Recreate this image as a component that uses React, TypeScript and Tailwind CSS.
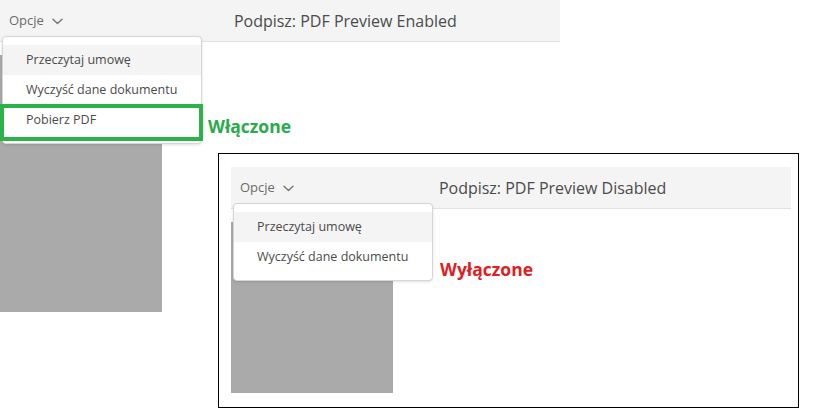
interface MenuItem {
  label: string;
  active?: boolean;
  outlined?: boolean;
}

interface PreviewWindowProps {
  title: string;
  titleClass: string;
  items: MenuItem[];
  bodyClass: string;
  grayClass: string;
}

const Chevron = () => (
  <svg width="11" height="7" viewBox="0 0 11 7" fill="none" className="mt-[2px]">
    <path d="M1 1.2l4.5 4.3L10 1.2" stroke="#7a7a7a" strokeWidth="1.5" strokeLinecap="round" strokeLinejoin="round" />
  </svg>
);

const PreviewWindow = ({ title, titleClass, items, bodyClass, grayClass }: PreviewWindowProps) => {
  return (
    <div className="relative w-[560px]">
      <header className="flex h-[42px] items-center border-b border-[#e2e2e2] bg-[#f4f4f4]">
        <button type="button" className="flex items-center gap-[8px] pl-[9px] text-[13px] text-[#6b6b6b]">
          Opcje
          <Chevron />
        </button>
        <h1 className={`text-[16px] text-[#4b4b4b] ${titleClass}`}>{title}</h1>
      </header>

      <div className={bodyClass}>
        <div className={`w-[162px] bg-[#aaaaaa] ${grayClass}`} />
      </div>

      <div className="absolute left-[2px] top-[36px] w-[200px] rounded-[4px] border border-[#d6d6d6] bg-white py-[8px] shadow-[0_1px_3px_rgba(0,0,0,0.12)]">
        {items.map((item) => (
          <div
            key={item.label}
            className={`relative flex h-[30px] items-center pl-[23px] text-[12.5px] text-[#4b4b4b] ${
              item.active ? 'bg-[#f4f4f4]' : ''
            }`}
          >
            {item.label}
            {item.outlined && (
              <span className="pointer-events-none absolute -left-[3px] -right-[2px] -top-[1px] -bottom-[6px] border-4 border-[#2db24a]" />
            )}
          </div>
        ))}
      </div>
    </div>
  );
};

export default function App() {
  return (
    <div className="relative h-[420px] w-[829px] overflow-hidden bg-white font-['Open_Sans',sans-serif]">
      <PreviewWindow
        title="Podpisz: PDF Preview Enabled"
        titleClass="ml-[171px]"
        bodyClass="h-[270px]"
        grayClass="mt-[13px] h-[257px]"
        items={[
          { label: 'Przeczytaj umowę', active: true },
          { label: 'Wyczyść dane dokumentu' },
          { label: 'Pobierz PDF', outlined: true },
        ]}
      />
      <span className="absolute left-[208px] top-[113px] text-[17.5px] font-bold text-[#2aab4a]">Włączone</span>

      <div className="absolute left-[218px] top-[153px] h-[255px] w-[581px] border border-black bg-white px-[12px] pt-[13px]">
        <PreviewWindow
          title="Podpisz: PDF Preview Disabled"
          titleClass="ml-[145px]"
          bodyClass="h-[184px]"
          grayClass="mt-[13px] h-[171px]"
          items={[
            { label: 'Przeczytaj umowę', active: true },
            { label: 'Wyczyść dane dokumentu' },
          ]}
        />
        <span className="absolute left-[221px] top-[102px] text-[17.5px] font-bold text-[#e0201f]">Wyłączone</span>
      </div>
    </div>
  );
}
